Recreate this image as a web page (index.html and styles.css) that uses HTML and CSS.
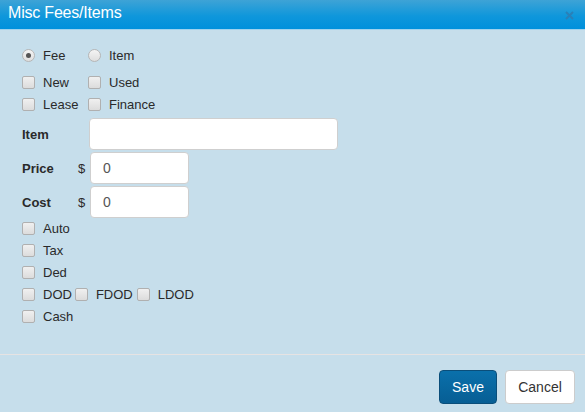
FILE: index.html
```html
<!DOCTYPE html>
<html>
<head>
<meta charset="utf-8">
<link rel="stylesheet" href="styles.css">
</head>
<body>
<div class="dialog">
  <div class="titlebar">
    <span class="title">Misc Fees/Items</span>
    <svg class="close" width="9" height="9" viewBox="0 0 9 9"><path d="M1 1L8 8M8 1L1 8" stroke="#2a80b8" stroke-width="2" fill="none"/></svg>
  </div>
  <div class="content">
    <div class="row radios">
      <label class="opt"><span class="radio checked"></span>Fee</label>
      <label class="opt"><span class="radio"></span>Item</label>
    </div>
    <div class="grid2">
      <label class="opt"><span class="check"></span>New</label>
      <label class="opt"><span class="check"></span>Used</label>
      <label class="opt"><span class="check"></span>Lease</label>
      <label class="opt"><span class="check"></span>Finance</label>
    </div>
    <div class="fields">
      <div class="field">
        <span class="flabel">Item</span>
        <span class="cur"></span>
        <input class="input wide" type="text" value="">
      </div>
      <div class="field">
        <span class="flabel">Price</span>
        <span class="cur">$</span>
        <input class="input short" type="text" value="0">
      </div>
      <div class="field">
        <span class="flabel">Cost</span>
        <span class="cur">$</span>
        <input class="input short" type="text" value="0">
      </div>
    </div>
    <div class="checks">
      <label class="opt"><span class="check"></span>Auto</label>
      <label class="opt"><span class="check"></span>Tax</label>
      <label class="opt"><span class="check"></span>Ded</label>
      <div class="row">
        <label class="opt tight"><span class="check"></span>DOD</label>
        <label class="opt tight"><span class="check"></span>FDOD</label>
        <label class="opt tight"><span class="check"></span>LDOD</label>
      </div>
      <label class="opt"><span class="check"></span>Cash</label>
    </div>
  </div>
  <div class="footer">
    <button class="btn primary">Save</button>
    <button class="btn">Cancel</button>
  </div>
</div>
</body>
</html>
```
FILE: styles.css
```css
html, body {
  margin: 0;
  padding: 0;
}
body {
  width: 585px;
  height: 412px;
  background: #c6deeb;
  font-family: "Liberation Sans", Arial, sans-serif;
  font-size: 13px;
  color: #2a2a2a;
  overflow: hidden;
}
.dialog {
  display: flex;
  flex-direction: column;
  height: 412px;
}
.titlebar {
  height: 29px;
  background: linear-gradient(#3ea3d6, #0f97db 55%, #0090dc);
  border-bottom: 1px solid #9fd2ee;
  display: flex;
  align-items: center;
  justify-content: space-between;
  padding: 0 11px 0 8px;
}
.title {
  color: #fff;
  font-size: 16px;
  letter-spacing: -0.2px;
  margin-top: -3px;
}
.close {
  margin-top: 2px;
}
.content {
  padding: 14px 0 0 22px;
  height: 324px;
  box-sizing: border-box;
}
.row {
  display: flex;
  align-items: center;
}
.opt {
  display: flex;
  align-items: center;
  height: 22px;
}
.radios {
  height: 22px;
}
.radios .opt {
  width: 66px;
}
.radio {
  width: 11px;
  height: 11px;
  border: 1px solid #b6b6b6;
  border-radius: 50%;
  background: linear-gradient(#f4f4f4, #dedede);
  margin-right: 8px;
  position: relative;
}
.radio.checked::after {
  content: "";
  position: absolute;
  left: 3px;
  top: 3px;
  width: 5px;
  height: 5px;
  border-radius: 50%;
  background: #555;
}
.check {
  width: 11px;
  height: 11px;
  border: 1px solid #b0b0b0;
  border-radius: 2px;
  background: linear-gradient(#f0f0f0, #dcdcdc);
  margin-right: 8px;
  flex: none;
}
.grid2 {
  display: grid;
  grid-template-columns: 66px auto;
  margin-top: 5px;
}
.fields {
  display: flex;
  flex-direction: column;
  gap: 2px;
  margin-top: 3px;
}
.field {
  display: flex;
  align-items: center;
  height: 32px;
}
.flabel {
  font-weight: bold;
  width: 56px;
}
.cur {
  width: 12px;
}
.input {
  height: 32px;
  box-sizing: border-box;
  border: 1px solid #cfcfcf;
  border-radius: 4px;
  background: #fff;
  font-family: "Liberation Sans", Arial, sans-serif;
  font-size: 14px;
  color: #555;
  padding: 0 12px;
  outline: none;
}
.wide {
  width: 249px;
  margin-left: -1px;
}
.short {
  width: 99px;
}
.checks {
  margin-top: -1px;
}
.tight {
  margin-right: 3px;
}
.tight:nth-child(2) {
  margin-right: 4px;
}
.footer {
  border-top: 1px solid #e6e3e3;
  display: flex;
  justify-content: flex-end;
  align-items: flex-start;
  gap: 8px;
  padding: 15px 10px 0 0;
  flex: 1;
}
.btn {
  height: 34px;
  font-family: "Liberation Sans", Arial, sans-serif;
  font-size: 14px;
  border-radius: 4px;
  border: 1px solid #ccc;
  background: #fff;
  color: #333;
  padding: 0 12px;
  width: 70px;
}
.btn.primary {
  width: 58px;
  background: linear-gradient(#0a70ab, #075e94);
  border-color: #0a4e7a;
  color: #fff;
}
```
